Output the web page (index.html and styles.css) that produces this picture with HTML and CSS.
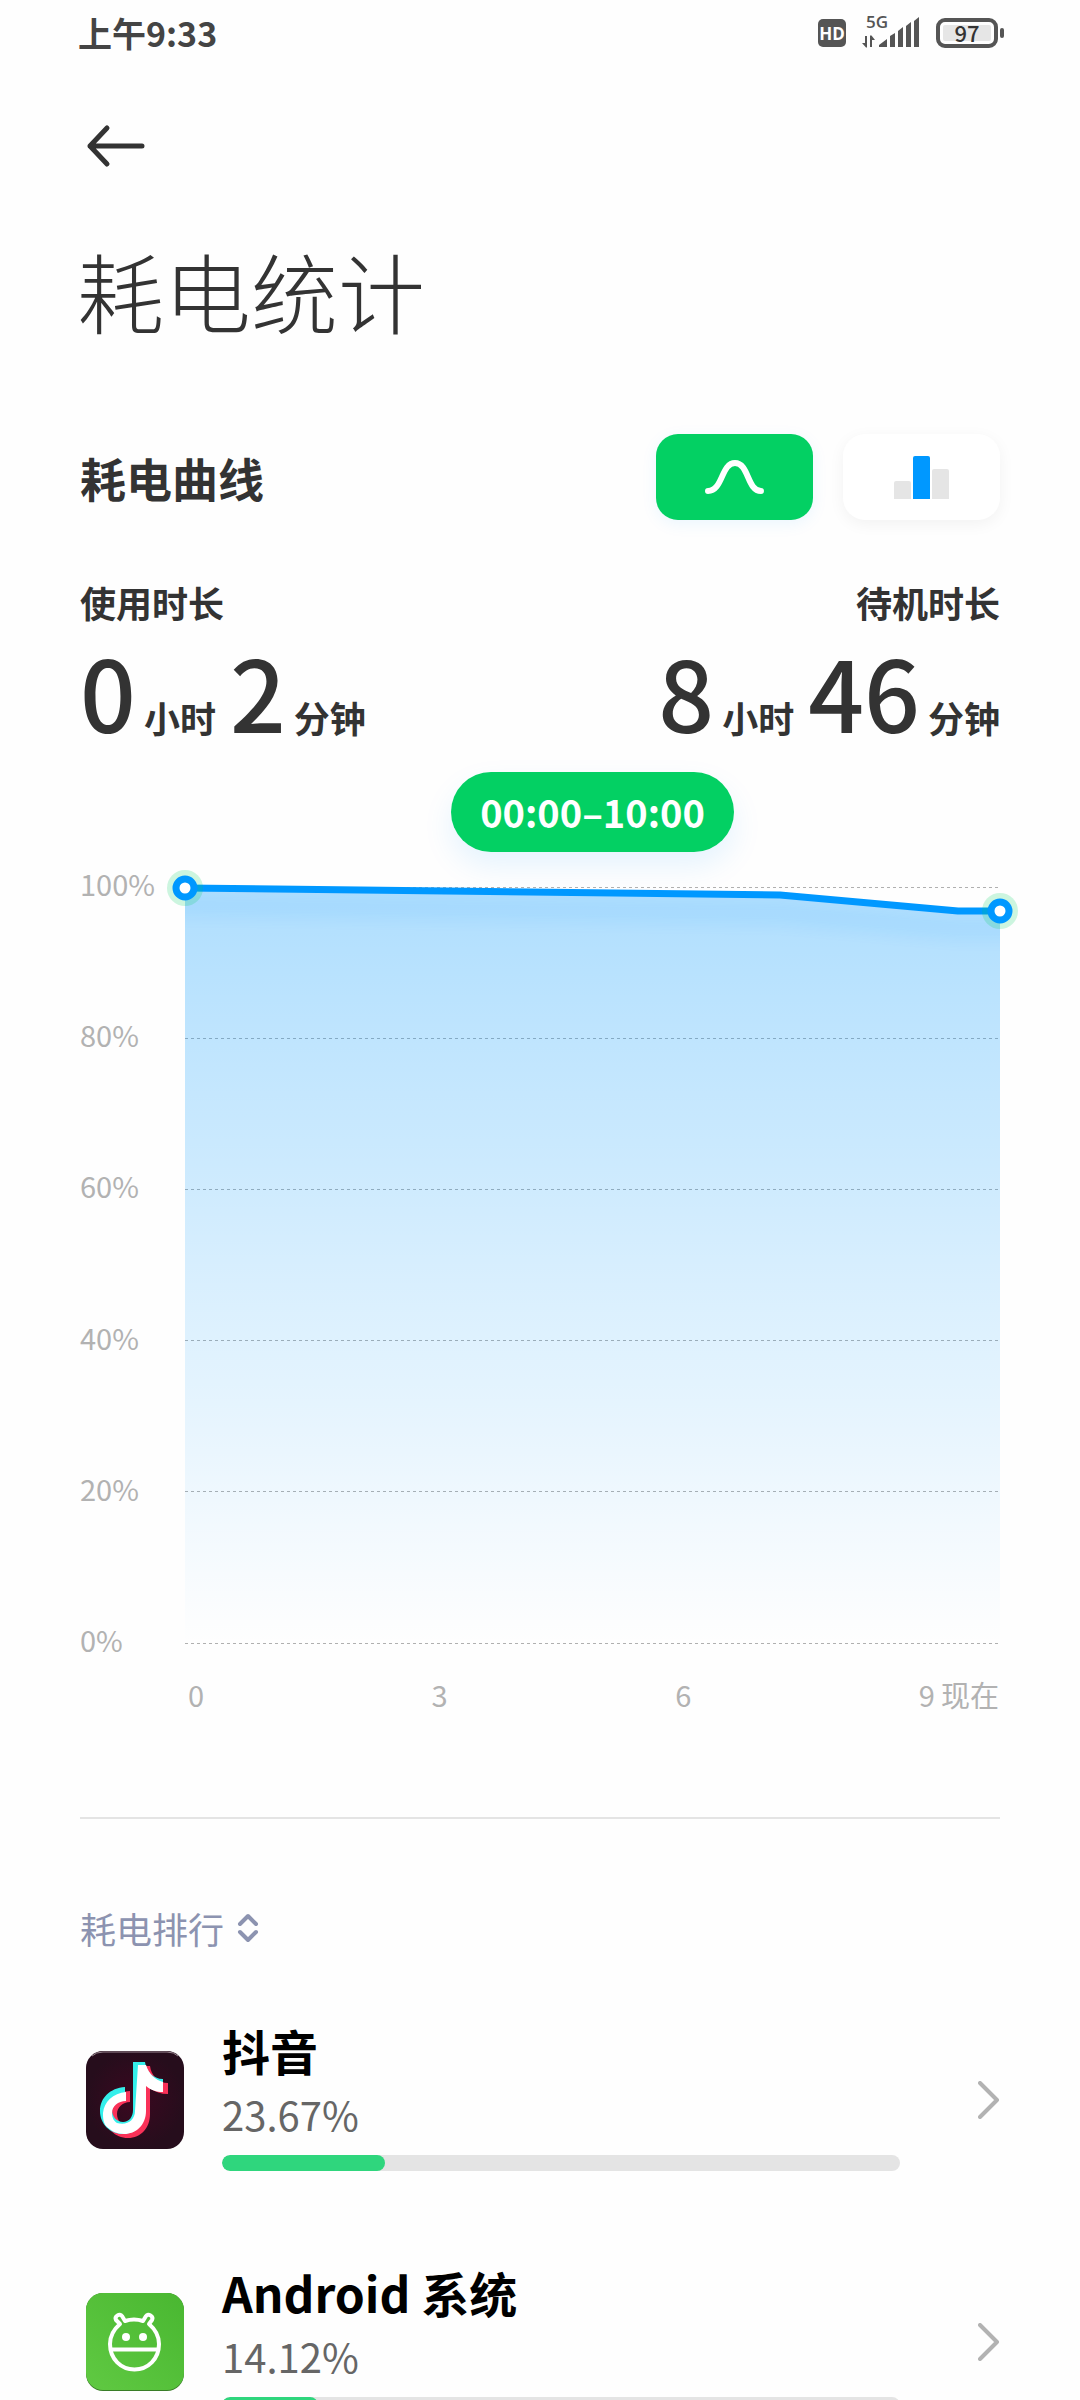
FILE: index.html
```html
<!DOCTYPE html>
<html lang="zh-CN">

<head>
    <title>耗电统计</title>
    <meta charset="UTF-8">
    <meta name="viewport" content="width=device-width, initial-scale=1">
    <link rel="stylesheet" href="styles.css">
</head>

<body>
    <div class="screen">
        <!-- 状态栏 -->
        <div class="status-bar">
            <span class="status-time">上午9:33</span>
            <div class="status-icons">
                <span class="hd">HD</span>
                <svg class="signal" width="58" height="34" viewBox="0 0 58 34" fill="#555">
                    <text class="signal-text" x="4" y="12">5G</text>
                    <path d="M5 20v11.500H4L0 27h3v-7zM8 31V19.500h1.500L13 24h-3v7z" />
                    <path d="M17 31v-2l8-6v8zM28 31V20l5-3v14zM36 31V15l5-4v20zM44 31V10l5-4v25zM52 31V5l5-4v30z" />
                </svg>
                <div class="battery"><span class="battery-level">97</span></div>
            </div>
        </div>

        <header class="header">
            <button class="back" type="button" aria-label="返回">
                <svg width="60" height="44" viewBox="0 0 60 44" fill="none" stroke="#333" stroke-width="5" stroke-linecap="round" stroke-linejoin="round">
                    <path d="M57 22H5M22 4L5 22l17 18" />
                </svg>
            </button>
            <h1>耗电统计</h1>
        </header>

        <section class="curve">
            <div class="curve-head">
                <h2>耗电曲线</h2>
                <div class="tabs">
                    <button class="tab active" type="button" aria-label="曲线">
                        <svg width="60" height="36" viewBox="0 0 60 36" fill="none" stroke="#fff" stroke-width="6" stroke-linecap="round">
                            <path d="M3 32C18 32 16 4 30 4s12 28 26 28" />
                        </svg>
                    </button>
                    <button class="tab" type="button" aria-label="柱状图">
                        <svg width="56" height="44" viewBox="0 0 56 44">
                            <path fill="#e5e5e5" d="M0 44V28q0-2 2-2h13q2 0 2 2v16zM38 44V16q0-2 2-2h13q2 0 2 2v28z" />
                            <path fill="#0098ff" d="M19 44V3q0-2 2-2h13q2 0 2 2v41z" />
                        </svg>
                    </button>
                </div>
            </div>

            <div class="stats">
                <div class="stat">
                    <div class="stat-label">使用时长</div>
                    <div class="stat-value"><b>0</b><span>小时</span><b>2</b><span>分钟</span></div>
                </div>
                <div class="stat right">
                    <div class="stat-label">待机时长</div>
                    <div class="stat-value"><b>8</b><span>小时</span><b>46</b><span>分钟</span></div>
                </div>
            </div>

            <div class="chart">
                <div class="range">00:00–10:00</div>
                <div class="y-axis">
                    <span>100%</span>
                    <span>80%</span>
                    <span>60%</span>
                    <span>40%</span>
                    <span>20%</span>
                    <span>0%</span>
                </div>
                <svg class="plot" viewBox="0 0 815 757">
                    <defs>
                        <linearGradient id="area" x1="0" y1="0" x2="0" y2="1">
                            <stop offset="0" stop-color="#0098ff" stop-opacity="0.310" />
                            <stop offset="1" stop-color="#0098ff" stop-opacity="0" />
                        </linearGradient>
                        <clipPath id="area-clip">
                            <path d="M0 0L595 8L773 24H815V757H0z" />
                        </clipPath>
                        <filter id="soft" x="-10%" y="-100%" width="120%" height="400%">
                            <feGaussianBlur stdDeviation="7" />
                        </filter>
                    </defs>
                    <path class="grid-line" d="M0 .5H815M0 151.500H815M0 302.500H815M0 453.500H815M0 604.500H815M0 756.500H815" />
                    <path fill="url(#area)" d="M0 0L595 8L773 24H815V757H0z" />
                    <g clip-path="url(#area-clip)">
                        <path class="line-shadow" filter="url(#soft)" d="M-20 18L595 26L773 42H840" />
                    </g>
                    <path class="line" d="M0 1L595 8L773 24H815" />
                    <circle class="halo" cx="0" cy="1" r="18" />
                    <circle class="ring" cx="0" cy="1" r="9" />
                    <circle class="halo" cx="815" cy="24" r="18" />
                    <circle class="ring" cx="815" cy="24" r="9" />
                </svg>
                <div class="x-axis">
                    <span>0</span>
                    <span>3</span>
                    <span>6</span>
                    <span class="now"><span>9</span><span>现在</span></span>
                </div>
            </div>
        </section>

        <section class="rank">
            <button class="rank-title" type="button">
                耗电排行
                <svg width="22" height="30" viewBox="0 0 22 30" fill="none" stroke="#8c93b0" stroke-width="4" stroke-linecap="round" stroke-linejoin="round">
                    <path d="M3 11l8-8 8 8M3 19l8 8 8-8" />
                </svg>
            </button>
            <ul class="apps">
                <li>
                    <a class="app" href="#douyin">
                        <svg class="app-icon" viewBox="0 0 98 98">
                            <defs>
                                <radialGradient id="douyin-bg">
                                    <stop offset="0" stop-color="#3b0820" />
                                    <stop offset="1" stop-color="#260d1c" />
                                </radialGradient>
                                <!-- 音符 -->
                                <path id="note" d="M48 12h12c1 9 8 17 18 17v11c-7 0-13-2-18-6v26c0 14-9 24-22 24S15 74 15 61s10-23 25-24v11c-7 0-13 5-13 12s5 12 11 12 10-5 10-12z" />
                            </defs>
                            <rect width="98" height="98" rx="17" fill="url(#douyin-bg)" />
                            <path d="M6 5Q10 1 17 1h64q7 0 11 4" fill="none" stroke="#998891" stroke-width="1" />
                            <use href="#note" x="4" y="3" fill="#f93158" />
                            <use href="#note" x="-1" y="-1" fill="#35efeb" />
                            <path fill="#fff" d="M52 14h8c3 9 9 15 17 17v10c-7 0-12-2-17-6v25c0 14-10 23-22 23-7 0-13-3-18-8-3-4-3-9-3-13 1-11 10-20 23-21v9c-8 0-14 5-14 12 0 5 2 8 5 10 10 3 18-3 18-12z" />
                        </svg>
                        <div class="app-info">
                            <div class="app-name">抖音</div>
                            <div class="app-percent">23.67%</div>
                            <div class="bar"><div class="bar-fill" style="width: 24%"></div></div>
                        </div>
                        <svg class="arrow" viewBox="0 0 22 38">
                            <path d="M2 2l17 17L2 36" />
                        </svg>
                    </a>
                </li>
                <li>
                    <a class="app" href="#android">
                        <svg class="app-icon" viewBox="0 0 98 98">
                            <defs>
                                <linearGradient id="android-bg" x1="0" y1="1" x2="1" y2="0">
                                    <stop offset="0" stop-color="#60c942" />
                                    <stop offset="1" stop-color="#49b731" />
                                </linearGradient>
                            </defs>
                            <rect width="98" height="98" rx="17" fill="#397d27" />
                            <rect width="98" height="97" rx="17" fill="url(#android-bg)" />
                            <g fill="none" stroke="#fff" stroke-width="4" stroke-linejoin="round">
                                <path d="M34 31l-4-4c-2-4 4-7 6-4l3 5c6-2 12-2 18 0l3-5c2-3 8 0 6 4l-3 4C70 37 73 44 73 51c0 15-11 25.500-24.500 25.500S24 66 24 51c0-7 3-14 10-20z" />
                                <path d="M24 56.500h49" />
                            </g>
                            <circle cx="40" cy="44" r="4" fill="#fff" />
                            <circle cx="57" cy="44" r="4" fill="#fff" />
                        </svg>
                        <div class="app-info">
                            <div class="app-name">Android 系统</div>
                            <div class="app-percent">14.12%</div>
                            <div class="bar"><div class="bar-fill" style="width: 14.12%"></div></div>
                        </div>
                        <svg class="arrow" viewBox="0 0 22 38">
                            <path d="M2 2l17 17L2 36" />
                        </svg>
                    </a>
                </li>
            </ul>
        </section>
    </div>
</body>

</html>
```
FILE: styles.css
```css
* {
    box-sizing: border-box;
    margin: 0;
    padding: 0;
}

body {
    background-color: #fefefe;
    color: #333333;
    font-family: "Noto Sans CJK SC", sans-serif;
}

button {
    border: none;
    background: none;
    font-family: inherit;
    cursor: pointer;
}

svg {
    display: block;
    flex-shrink: 0;
}

.screen {
    height: 100vh;
    padding: 0 80px;
    overflow: hidden;
}

/* 状态栏 */
.status-bar {
    display: flex;
    justify-content: space-between;
    align-items: center;
    height: 66px;
    margin: 0 -4px 0 -2px;
}

.status-time {
    color: #444444;
    font-size: 34px;
    font-weight: bold;
    line-height: 40px;
}

.status-icons {
    display: flex;
    align-items: center;
    gap: 16px;
}

.hd {
    width: 28px;
    height: 28px;
    border-radius: 5px;
    background-color: #555555;
    color: #ffffff;
    font: bold 17px/29px "Open Sans", sans-serif;
    text-align: center;
}

.signal {
    overflow: visible;
}

.signal-text {
    font: 600 17px "Open Sans", sans-serif;
}

.battery {
    position: relative;
    width: 62px;
    height: 30px;
    margin-right: 6px;
    padding: 3px;
    border: 4px solid #555555;
    border-radius: 9px;
}

.battery::after {
    content: "";
    position: absolute;
    top: 6px;
    right: -10px;
    width: 4px;
    height: 10px;
    border-radius: 2px;
    background-color: #555555;
}

.battery-level {
    display: block;
    height: 16px;
    border-radius: 2px;
    background-color: #e6e6e6;
    font: 500 22px/14px "Noto Sans CJK SC", sans-serif;
    text-align: center;
}

/* 标题 */
.back {
    display: block;
    margin: 58px 0 0 5px;
}

h1 {
    margin: 62px 0 0 -3px;
    font-size: 87px;
    font-weight: 300;
    line-height: 120px;
}

/* 曲线 */
.curve-head {
    display: flex;
    justify-content: space-between;
    align-items: center;
    margin-top: 84px;
}

h2 {
    font-size: 46px;
    line-height: 60px;
}

.tabs {
    display: flex;
    gap: 30px;
}

.tab {
    display: flex;
    justify-content: center;
    align-items: center;
    width: 157px;
    height: 86px;
    border-radius: 22px;
    background-color: #ffffff;
    box-shadow: 0 4px 16px rgba(0, 0, 0, 0.05);
}

.tab.active {
    background-color: #03d063;
    box-shadow: 0 4px 16px rgba(0, 152, 255, 0.08);
}

.stats {
    display: flex;
    justify-content: space-between;
    margin-top: 62px;
}

.stat.right {
    text-align: right;
}

.stat-label {
    font-size: 36px;
    font-weight: bold;
    line-height: 40px;
}

.stat-value {
    display: flex;
    align-items: baseline;
    gap: 8px;
    margin-top: 18px;
    font-size: 36px;
    font-weight: bold;
    line-height: 40px;
}

.stat-value b {
    font-size: 98px;
    font-weight: 500;
    line-height: 100px;
}

.stat-value span + b {
    margin-left: 6px;
}

.chart {
    display: grid;
    grid-template-columns: 105px 1fr;
    margin-top: 32px;
    color: #b2b2b2;
    font-size: 29px;
    line-height: 32px;
}

.range {
    grid-column: 2;
    justify-self: center;
    margin-bottom: 35px;
    padding: 0 29px;
    border-radius: 40px;
    background-color: #03d063;
    box-shadow: 0 14px 30px rgba(0, 152, 255, 0.1);
    color: #ffffff;
    font-size: 38px;
    font-weight: bold;
    line-height: 80px;
}

.y-axis {
    display: flex;
    flex-direction: column;
    justify-content: space-between;
    margin: -20px 0 -11px;
}

.plot {
    width: 100%;
    overflow: visible;
}

.grid-line {
    stroke: #b0b0b0;
    stroke-width: 1;
    stroke-dasharray: 3 3;
}

.line,
.line-shadow {
    fill: none;
    stroke: #0098ff;
    stroke-width: 7;
    stroke-linejoin: round;
}

.line-shadow {
    stroke-width: 24;
    opacity: 0.06;
}

.halo {
    fill: #03d063;
    opacity: 0.2;
}

.ring {
    fill: #ffffff;
    stroke: #0098ff;
    stroke-width: 7;
}

.x-axis {
    display: grid;
    grid-column: 2;
    grid-template-columns: 3fr 3fr 3fr 1fr;
    margin-top: 34px;
    padding-left: 3px;
}

.now {
    display: flex;
    gap: 6px;
    white-space: nowrap;
}

/* 排行 */
.rank {
    margin-top: 107px;
    padding-top: 89px;
    border-top: 2px solid #e4e4e4;
}

.rank-title {
    display: flex;
    align-items: center;
    gap: 13px;
    color: #8c93b0;
    font-size: 36px;
    line-height: 40px;
}

.apps {
    display: flex;
    flex-direction: column;
    gap: 99px;
    margin-top: 80px;
    list-style: none;
}

.app {
    display: flex;
    align-items: center;
    padding-left: 6px;
    color: #000000;
    text-decoration: none;
}

.app-icon {
    width: 98px;
    height: 98px;
}

.app-info {
    flex: 1;
    margin: -4px 78px 0 38px;
}

.app-name {
    font-size: 48px;
    font-weight: bold;
    line-height: 52px;
}

.app-percent {
    margin-top: 18px;
    color: #666666;
    font-size: 40px;
    line-height: 40px;
}

.bar {
    height: 16px;
    margin-top: 21px;
    border-radius: 8px;
    background-color: #e4e4e4;
    overflow: hidden;
}

.bar-fill {
    height: 100%;
    border-radius: 8px;
    background-color: #2fd67d;
}

.arrow {
    width: 22px;
    height: 38px;
    fill: none;
    stroke: #b2b2b2;
    stroke-width: 4;
    stroke-linecap: round;
    stroke-linejoin: round;
}
```
